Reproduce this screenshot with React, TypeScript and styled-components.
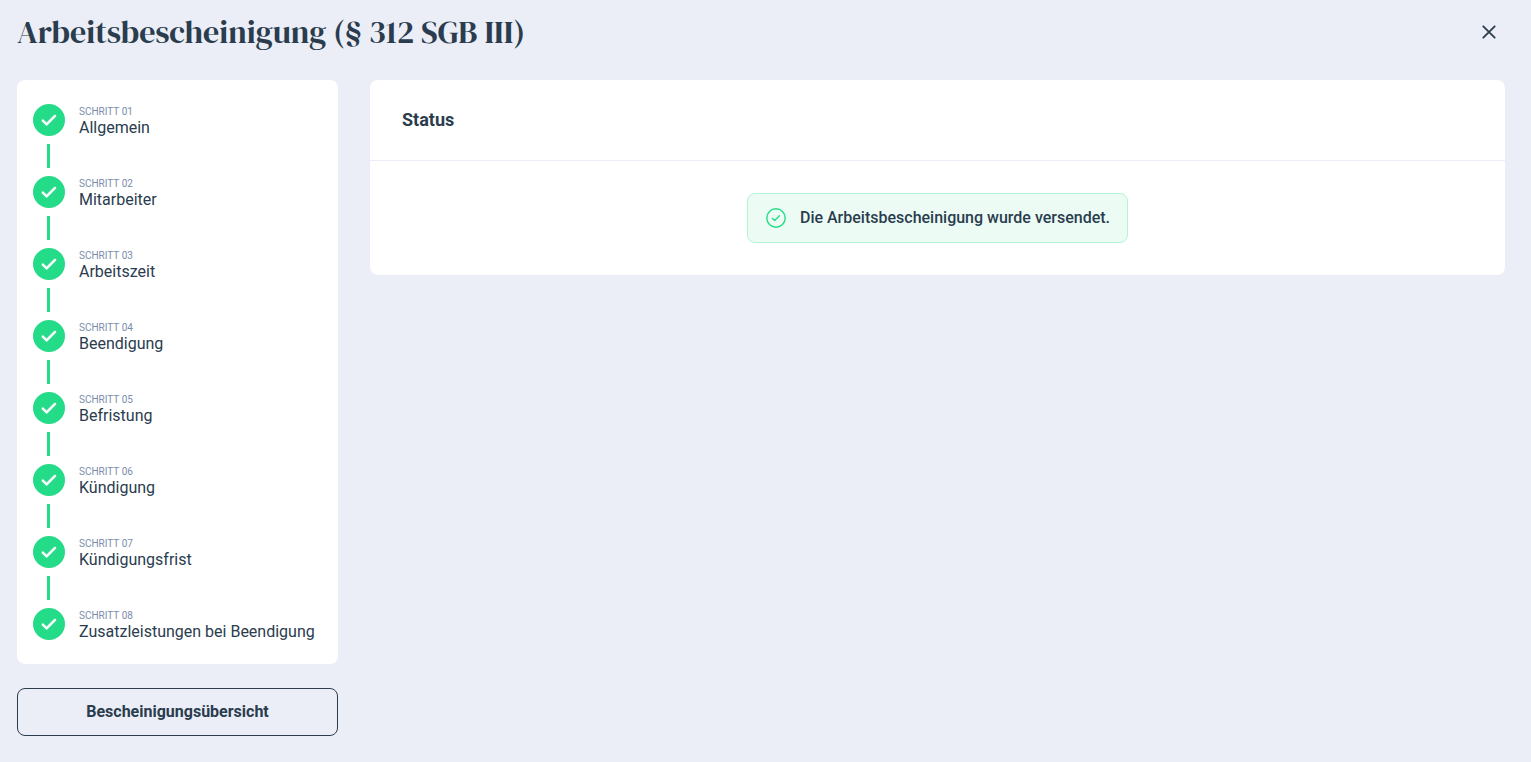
import React from "react";
import styled, { createGlobalStyle } from "styled-components";

const color = {
  page: "#ebeef6",
  card: "#ffffff",
  text: "#2a3c4e",
  muted: "#7b8cab",
  green: "#24db87",
  greenSoft: "#ecfcf5",
  greenBorder: "#b6f2d6",
};

const GlobalStyle = createGlobalStyle`
  *, *::before, *::after { box-sizing: border-box; }
  body {
    margin: 0;
    background: ${color.page};
    color: ${color.text};
    font-family: Roboto, "Liberation Sans", sans-serif;
    font-size: 16px;
    line-height: 24px;
  }
`;

const Page = styled.div`
  padding: 12px 26px 26px 17px;
`;

const Header = styled.header`
  display: flex;
  align-items: center;
  justify-content: space-between;
  margin-bottom: 28px;
`;

const Title = styled.h1`
  margin: 0;
  font-family: "DM Serif Display", "Liberation Serif", serif;
  font-size: 32px;
  font-weight: 400;
  line-height: 40px;
`;

const CloseButton = styled.button`
  display: flex;
  align-items: center;
  justify-content: center;
  width: 32px;
  height: 32px;
  padding: 0;
  border: 0;
  background: none;
  color: inherit;
  cursor: pointer;
`;

const Columns = styled.div`
  display: flex;
  align-items: flex-start;
  gap: 32px;
`;

const Sidebar = styled.aside`
  display: flex;
  flex: 0 0 321px;
  flex-direction: column;
  gap: 24px;
`;

const Card = styled.section`
  border-radius: 8px;
  background: ${color.card};
`;

const StatusCard = styled(Card)`
  flex: 1;
  min-width: 0;
`;

const StepCard = styled(Card)`
  padding: 24px 16px;
`;

const StepList = styled.ol`
  display: flex;
  flex-direction: column;
  gap: 8px;
  margin: 0;
  padding: 0;
  list-style: none;
`;

const Step = styled.li`
  display: flex;
  flex-direction: column;
  gap: 8px;

  &:not(:last-child)::after {
    content: "";
    width: 3px;
    height: 24px;
    margin-left: 14px;
    background: ${color.green};
  }
`;

const StepRow = styled.div`
  display: flex;
  gap: 14px;
  height: 32px;
`;

const StepText = styled.div`
  display: flex;
  flex-direction: column;
  line-height: 16px;
`;

const StepLabel = styled.span`
  color: ${color.muted};
  font-size: 10px;
  text-transform: uppercase;
`;

const StepName = styled.span`
  white-space: nowrap;
`;

const OutlineButton = styled.button`
  height: 48px;
  border: 1px solid ${color.text};
  border-radius: 8px;
  background: none;
  color: inherit;
  font: inherit;
  font-weight: 700;
  cursor: pointer;
`;

const CardHeader = styled.div`
  padding: 28px 32px;
  border-bottom: 1px solid ${color.page};
`;

const CardTitle = styled.h2`
  margin: 0;
  font-size: 18px;
  font-weight: 700;
  line-height: 24px;
`;

const CardBody = styled.div`
  display: flex;
  justify-content: center;
  padding: 32px;
`;

const Notice = styled.div`
  display: flex;
  align-items: center;
  gap: 14px;
  padding: 12px 17px 12px 18px;
  border: 1px solid ${color.greenBorder};
  border-radius: 8px;
  background: ${color.greenSoft};
  font-weight: 500;
`;

const steps = [
  "Allgemein",
  "Mitarbeiter",
  "Arbeitszeit",
  "Beendigung",
  "Befristung",
  "Kündigung",
  "Kündigungsfrist",
  "Zusatzleistungen bei Beendigung",
];

const DoneIcon = () => (
  <svg width="32" height="32" viewBox="0 0 32 32" fill="none" aria-hidden="true">
    <circle cx="16" cy="16" r="16" fill={color.green} />
    <path d="M9.8 16.6 13.6 20.3 22 11.8" stroke="#fff" strokeWidth="2.6" strokeLinecap="round" strokeLinejoin="round" />
  </svg>
);

const SuccessIcon = () => (
  <svg width="20" height="20" viewBox="0 0 20 20" fill="none" stroke={color.green} strokeWidth="1.4" strokeLinecap="round" strokeLinejoin="round" aria-hidden="true">
    <circle cx="10" cy="10" r="9.2" />
    <path d="M6.4 10.4 8.7 12.5 13.4 7.7" />
  </svg>
);

const CloseIcon = () => (
  <svg width="14" height="14" viewBox="0 0 14 14" fill="none" stroke="currentColor" strokeWidth="1.8" strokeLinecap="round" aria-hidden="true">
    <path d="M1.3 1.3 12.7 12.7M12.7 1.3 1.3 12.7" />
  </svg>
);

export default function App() {
  return (
    <Page>
      <GlobalStyle />
      <Header>
        <Title>Arbeitsbescheinigung (§ 312 SGB III)</Title>
        <CloseButton type="button" aria-label="Schließen">
          <CloseIcon />
        </CloseButton>
      </Header>
      <Columns>
        <Sidebar>
          <StepCard>
            <StepList>
              {steps.map((name, index) => (
                <Step key={name}>
                  <StepRow>
                    <DoneIcon />
                    <StepText>
                      <StepLabel>Schritt {String(index + 1).padStart(2, "0")}</StepLabel>
                      <StepName>{name}</StepName>
                    </StepText>
                  </StepRow>
                </Step>
              ))}
            </StepList>
          </StepCard>
          <OutlineButton type="button">Bescheinigungsübersicht</OutlineButton>
        </Sidebar>
        <StatusCard>
          <CardHeader>
            <CardTitle>Status</CardTitle>
          </CardHeader>
          <CardBody>
            <Notice role="status">
              <SuccessIcon />
              <span>Die Arbeitsbescheinigung wurde versendet.</span>
            </Notice>
          </CardBody>
        </StatusCard>
      </Columns>
    </Page>
  );
}
